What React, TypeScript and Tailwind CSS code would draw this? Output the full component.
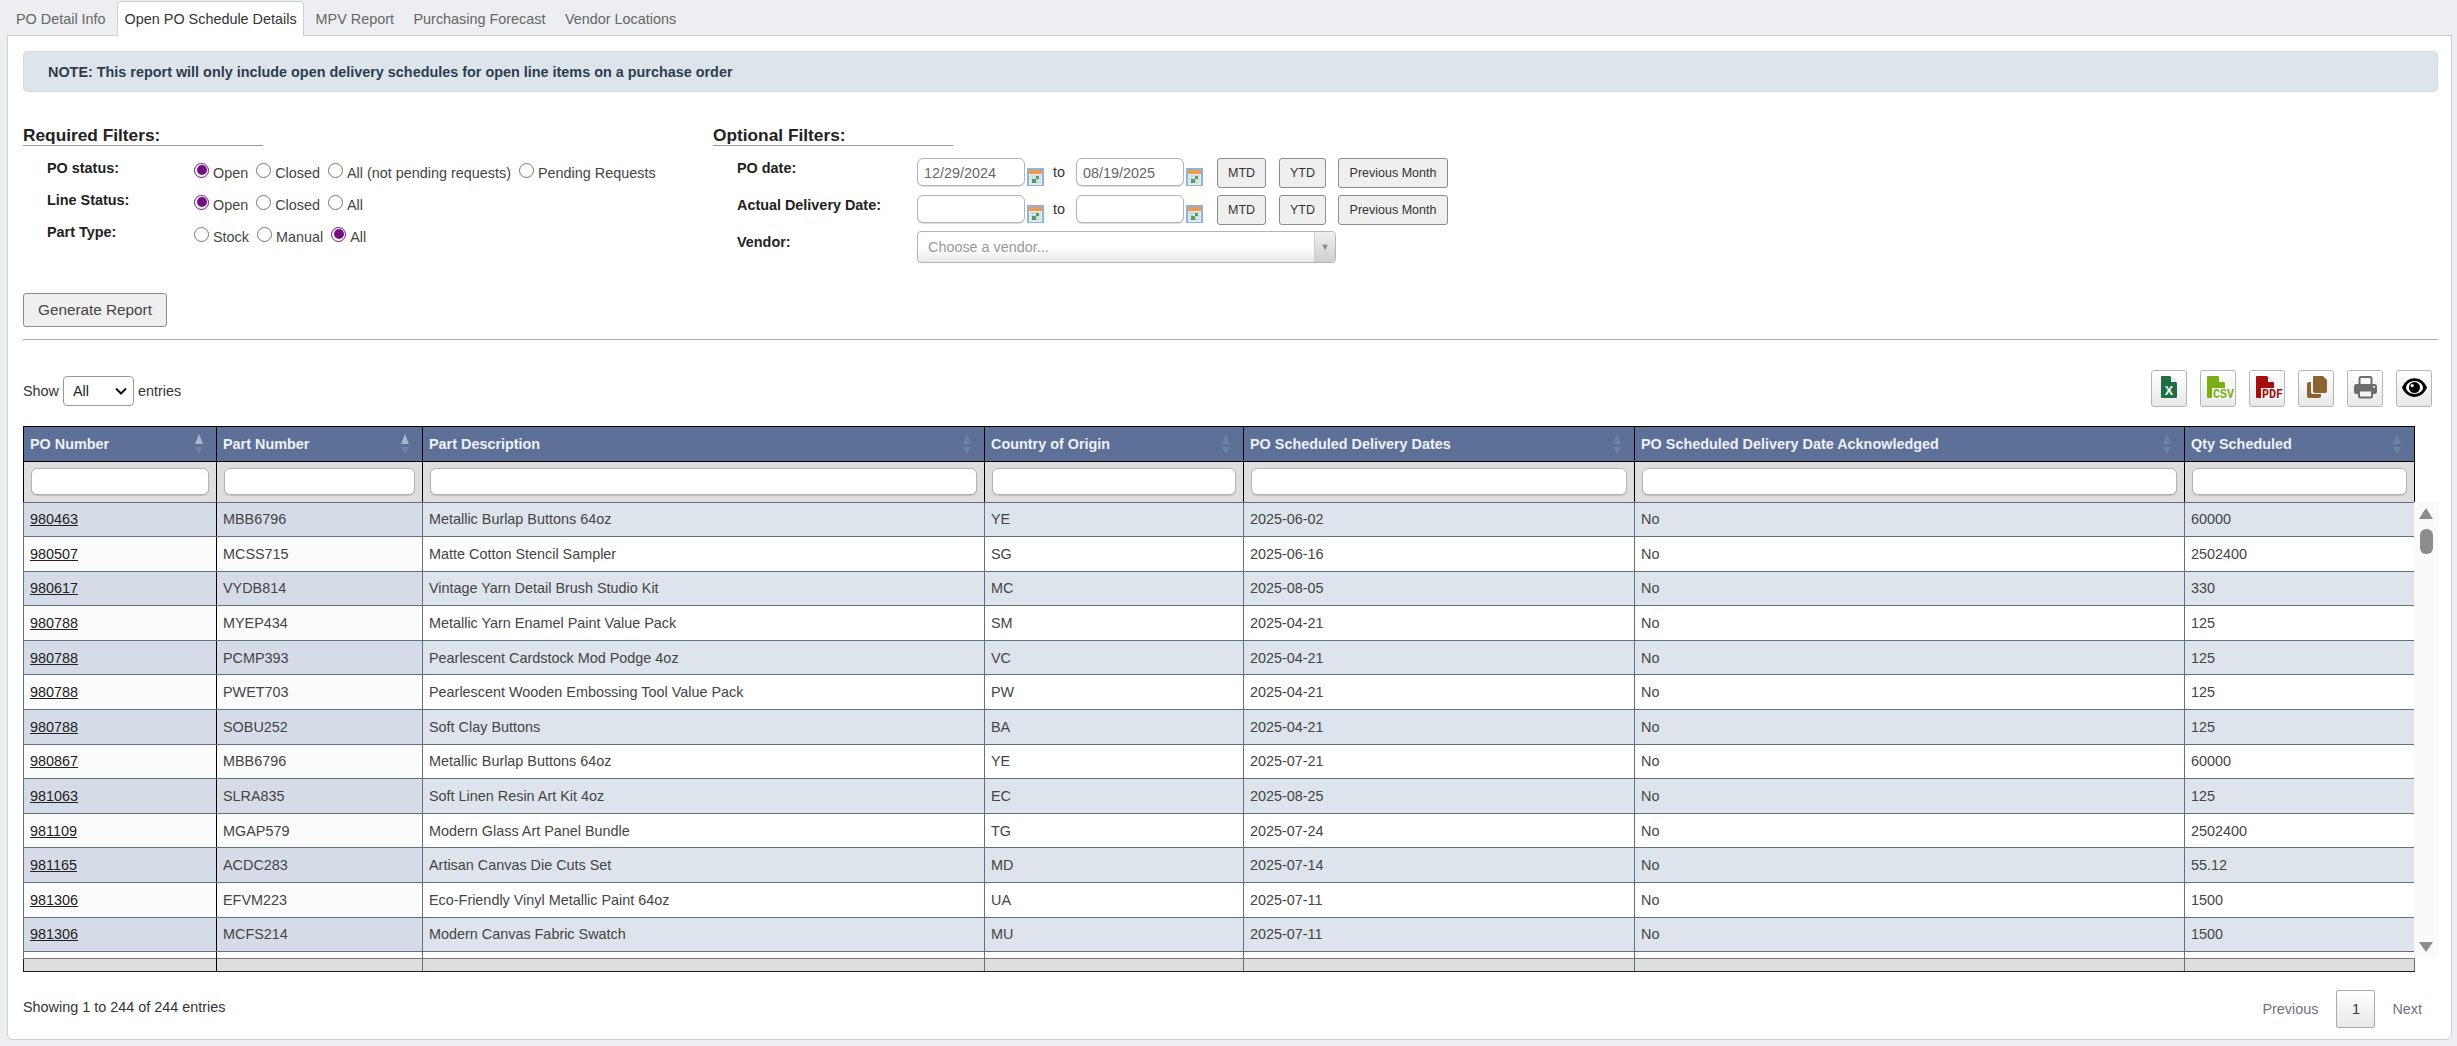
const rows = [
  ["980463", "MBB6796", "Metallic Burlap Buttons 64oz", "YE", "2025-06-02", "No", "60000"],
  ["980507", "MCSS715", "Matte Cotton Stencil Sampler", "SG", "2025-06-16", "No", "2502400"],
  ["980617", "VYDB814", "Vintage Yarn Detail Brush Studio Kit", "MC", "2025-08-05", "No", "330"],
  ["980788", "MYEP434", "Metallic Yarn Enamel Paint Value Pack", "SM", "2025-04-21", "No", "125"],
  ["980788", "PCMP393", "Pearlescent Cardstock Mod Podge 4oz", "VC", "2025-04-21", "No", "125"],
  ["980788", "PWET703", "Pearlescent Wooden Embossing Tool Value Pack", "PW", "2025-04-21", "No", "125"],
  ["980788", "SOBU252", "Soft Clay Buttons", "BA", "2025-04-21", "No", "125"],
  ["980867", "MBB6796", "Metallic Burlap Buttons 64oz", "YE", "2025-07-21", "No", "60000"],
  ["981063", "SLRA835", "Soft Linen Resin Art Kit 4oz", "EC", "2025-08-25", "No", "125"],
  ["981109", "MGAP579", "Modern Glass Art Panel Bundle", "TG", "2025-07-24", "No", "2502400"],
  ["981165", "ACDC283", "Artisan Canvas Die Cuts Set", "MD", "2025-07-14", "No", "55.12"],
  ["981306", "EFVM223", "Eco-Friendly Vinyl Metallic Paint 64oz", "UA", "2025-07-11", "No", "1500"],
  ["981306", "MCFS214", "Modern Canvas Fabric Swatch", "MU", "2025-07-11", "No", "1500"],
];

const columns = [
  { title: "PO Number", width: 193 },
  { title: "Part Number", width: 206 },
  { title: "Part Description", width: 562 },
  { title: "Country of Origin", width: 259 },
  { title: "PO Scheduled Delivery Dates", width: 391 },
  { title: "PO Scheduled Delivery Date Acknowledged", width: 550 },
  { title: "Qty Scheduled", width: 230 },
];

function Cols() {
  return (
    <colgroup>
      {columns.map((c) => (
        <col key={c.title} style={{ width: c.width }} />
      ))}
    </colgroup>
  );
}

function Radio({ label, checked }: { label: string; checked?: boolean }) {
  return (
    <span className="mr-[8px] inline-flex items-center whitespace-nowrap">
      <span
        className={`mr-[4px] flex h-[15px] w-[15px] shrink-0 items-center justify-center rounded-full border bg-white ${
          checked ? "border-[#70117f]" : "border-[#767676]"
        }`}
      >
        {checked && <span className="h-[10px] w-[10px] rounded-full bg-[#70117f]" />}
      </span>
      <span className="mt-[5px]">{label}</span>
    </span>
  );
}

function CalendarIcon() {
  return (
    <svg width="17" height="18" viewBox="0 0 17 18" className="ml-[2px] mt-[10px] shrink-0">
      <rect width="17" height="18" fill="#8db2dc" />
      <rect x="2" y="2" width="13" height="15" fill="#e6edf3" />
      <rect x="2" y="2" width="13" height="4" fill="#f09a4e" />
      <path d="M3 8h11M3 11h11M3 14h11M6 7v9M10 7v9" stroke="#bfcbd6" strokeWidth="1" />
      <rect x="9" y="8" width="3" height="3" fill="#4ea15c" />
      <rect x="5" y="11" width="4" height="4" fill="#4ea15c" />
    </svg>
  );
}

function DateInput({ value }: { value?: string }) {
  return (
    <span className="flex h-[28px] w-[108px] shrink-0 items-center rounded-[6px] border border-[#b4b4b4] bg-white pl-[6px] pt-[1px] text-[#666] shadow-[0_1px_1px_rgba(0,0,0,0.15)]">
      {value}
    </span>
  );
}

function SmallButton({ children, w, ml }: { children: string; w: string; ml: string }) {
  return (
    <button className={`${ml} h-[30px] shrink-0 ${w} whitespace-nowrap rounded-[3px] border border-[#8c8c8c] bg-[#efefef] text-center text-[12.5px] text-[#333]`}>
      {children}
    </button>
  );
}

function DateRow({ label, from, to }: { label: string; from?: string; to?: string }) {
  return (
    <div className="flex h-[37px]">
      <div className="w-[204px] whitespace-nowrap pl-[24px] pt-[2px] font-bold text-[#222]">{label}</div>
      <DateInput value={from} />
      <CalendarIcon />
      <span className="ml-[9px] mr-[11px] pt-[6px] text-[#333]">to</span>
      <DateInput value={to} />
      <CalendarIcon />
      <SmallButton ml="ml-[14px]" w="w-[49px]">MTD</SmallButton>
      <SmallButton ml="ml-[13px]" w="w-[47px]">YTD</SmallButton>
      <SmallButton ml="ml-[12px]" w="w-[110px]">Previous Month</SmallButton>
    </div>
  );
}

function ToolButton({ children }: { children: React.ReactNode }) {
  return (
    <div className="h-[37px] w-[36px] rounded-[3px] border border-[#b5b5b5] bg-gradient-to-b from-white to-[#e8e8e8]">
      <svg width="34" height="35" viewBox="0 0 34 35" className="block">
        {children}
      </svg>
    </div>
  );
}

function FileDoc({ x, w, fill }: { x: number; w: number; fill: string }) {
  const r = x + w;
  return (
    <>
      <path d={`M${x + 1} 5H${r - 7}L${r} 12V26a1 1 0 0 1-1 1H${x + 1}a1 1 0 0 1-1-1V6a1 1 0 0 1 1-1z`} fill={fill} />
      <path d={`M${r - 6} 6L${r - 1} 11H${r - 6}z`} fill="#fff" />
    </>
  );
}

function LabelledDoc({ fill, label }: { fill: string; label: string }) {
  return (
    <>
      <FileDoc x={6} w={18} fill={fill} />
      <rect x="11" y="17" width="23" height="11" fill="#f6f6f6" />
      <text
        x="12"
        y="27"
        fontSize="12"
        fontWeight="700"
        fontFamily="'Liberation Mono', monospace"
        fill={fill}
        textLength="21"
        lengthAdjust="spacingAndGlyphs"
      >
        {label}
      </text>
    </>
  );
}

function SortArrows({ active }: { active?: boolean }) {
  return (
    <span className="flex flex-col gap-[3px]">
      <span
        className={`h-0 w-0 border-x-[4.5px] border-b-[10px] border-x-transparent ${
          active ? "border-b-[#a9b6cb]" : "border-b-[#71829f]"
        }`}
      />
      <span className="h-0 w-0 border-x-[4.5px] border-t-[7px] border-x-transparent border-t-[#71829f]" />
    </span>
  );
}

export default function App() {
  return (
    <div className="h-[1046px] w-[2457px] overflow-hidden bg-[#eceef1] font-['Liberation_Sans',Arial,sans-serif] text-[14.4px] leading-[16px] text-[#333]">
      {/* tabs */}
      <div className="flex h-[35px] items-end gap-[3.5px] whitespace-nowrap pl-[8px]">
        <div className="flex h-[30px] items-center px-[8px] pb-[2px] text-[#666]">PO Detail Info</div>
        <div className="relative z-10 mb-[-1px] flex h-[35px] items-center rounded-t-[4px] border border-b-0 border-[#c9cfd8] bg-white px-[6.5px] pb-[1px] text-[#333]">
          Open PO Schedule Details
        </div>
        <div className="flex h-[30px] items-center px-[8px] pb-[2px] text-[#666]">MPV Report</div>
        <div className="flex h-[30px] items-center px-[8px] pb-[2px] text-[#666]">Purchasing Forecast</div>
        <div className="flex h-[30px] items-center px-[8px] pb-[2px] text-[#666]">Vendor Locations</div>
      </div>

      {/* panel */}
      <div className="ml-[7px] mr-[5px] h-[1005px] rounded-b-[6px] border border-[#c9cfd8] bg-white pl-[15px] pr-[13px] pt-[15px]">
        <div className="flex h-[41px] items-center rounded-[4px] border border-[#d3dde5] bg-[#dde5eb] pl-[24px] font-bold text-[#2b3e50]">
          NOTE: This report will only include open delivery schedules for open line items on a purchase order
        </div>

        {/* filters */}
        <div className="mt-[34px] flex h-[167px]">
          <div className="w-[690px]">
            <div className="h-[20px] w-[240px] border-b border-[#999] text-[17.3px] font-bold leading-[18px] text-[#222]">
              Required Filters:
            </div>
            <div className="mt-[8px] grid grid-cols-[171px_1fr] auto-rows-[32px]">
              <div className="pl-[24px] pt-[6px] font-bold text-[#222]">PO status:</div>
              <div className="flex items-center text-[#444]">
                <Radio label="Open" checked />
                <Radio label="Closed" />
                <Radio label="All (not pending requests)" />
                <Radio label="Pending Requests" />
              </div>
              <div className="pl-[24px] pt-[6px] font-bold text-[#222]">Line Status:</div>
              <div className="flex items-center text-[#444]">
                <Radio label="Open" checked />
                <Radio label="Closed" />
                <Radio label="All" />
              </div>
              <div className="pl-[24px] pt-[6px] font-bold text-[#222]">Part Type:</div>
              <div className="flex items-center text-[#444]">
                <Radio label="Stock" />
                <Radio label="Manual" />
                <Radio label="All" checked />
              </div>
            </div>
          </div>
          <div>
            <div className="h-[20px] w-[240px] border-b border-[#999] text-[17.3px] font-bold leading-[18px] text-[#222]">
              Optional Filters:
            </div>
            <div className="mt-[12px]">
              <DateRow label="PO date:" from="12/29/2024" to="08/19/2025" />
              <DateRow label="Actual Delivery Date:" />
              <div className="mt-[-1px] flex">
                <div className="w-[204px] pl-[24px] pt-[3px] font-bold text-[#222]">Vendor:</div>
                <div className="relative flex h-[32px] w-[419px] items-center rounded-[4px] border border-[#b4b4b4] bg-gradient-to-b from-white via-white to-[#eaeaea] pl-[10px] text-[#999]">
                  Choose a vendor...
                  <span className="absolute right-0 top-0 flex h-full w-[21px] items-center justify-center rounded-r-[4px] border-l border-[#ccc] bg-gradient-to-b from-[#f0f0f0] to-[#cfcfcf] text-[9px] text-[#888]">
                    ▼
                  </span>
                </div>
              </div>
            </div>
          </div>
        </div>

        <button className="block h-[34px] w-[144px] rounded-[3px] border border-[#8c8c8c] bg-[#efefef] text-[15.3px] text-[#444]">
          Generate Report
        </button>
        <div className="mt-[12px] h-px bg-[#aaa]" />

        {/* length + export */}
        <div className="flex h-[86px] items-start justify-between pr-[6px] pt-[30px]">
          <div className="mt-[6px] flex items-center text-[#333]">
            Show
            <span className="mx-[4px] flex h-[30px] w-[71px] items-center justify-between rounded-[4px] border border-[#999] bg-white pl-[9px] pr-[6px] text-[#222]">
              All
              <svg width="12" height="12" viewBox="0 0 12 12">
                <path d="M1 3.5l5 5 5-5" fill="none" stroke="#111" strokeWidth="2" />
              </svg>
            </span>
            entries
          </div>
          <div className="flex gap-[13px]">
            <ToolButton>
              <FileDoc x={9} w={16} fill="#1d6f42" />
              <text x="17" y="24" textAnchor="middle" fontSize="12.5" fontWeight="700" fontFamily="'Liberation Sans', sans-serif" fill="#fff">
                X
              </text>
            </ToolButton>
            <ToolButton>
              <LabelledDoc fill="#7aae14" label="CSV" />
            </ToolButton>
            <ToolButton>
              <LabelledDoc fill="#a30e0e" label="PDF" />
            </ToolButton>
            <ToolButton>
              <path d="M15 5h9l4 4v11a2 2 0 0 1-2 2H16a2 2 0 0 1-2-2V6a1 1 0 0 1 1-1z" fill="#8a6331" />
              <path d="M10 11h2v11a3 3 0 0 0 3 1h7v2a2 2 0 0 1-2 2H10a2 2 0 0 1-2-2V13a2 2 0 0 1 2-2z" fill="#8a6331" />
            </ToolButton>
            <ToolButton>
              <rect x="11.5" y="6" width="12" height="9" rx="1.5" fill="none" stroke="#6d6d6d" strokeWidth="2" />
              <rect x="6" y="13" width="23" height="10" rx="2.5" fill="#6d6d6d" />
              <rect x="11" y="19.5" width="13" height="7" rx="1" fill="#f4f4f4" stroke="#6d6d6d" strokeWidth="2" />
              <circle cx="26" cy="16" r="1" fill="#fff" />
            </ToolButton>
            <ToolButton>
              <path d="M5 16.5C10 4 25 4 30 16.5C25 29 10 29 5 16.5Z" fill="#000" />
              <ellipse cx="17.5" cy="16.5" rx="8.5" ry="6.5" fill="#fff" />
              <circle cx="17.5" cy="16.5" r="5.5" fill="#000" />
              <circle cx="15.2" cy="14.6" r="1.6" fill="#fff" />
            </ToolButton>
          </div>
        </div>

        {/* table */}
        <div className="w-[2415px]">
          <table className="w-[2391px] table-fixed border-collapse border-t border-black">
            <Cols />
            <thead>
              <tr className="h-[35px] bg-[#5d7097]">
                {columns.map((c, i) => (
                  <th
                    key={c.title}
                    className={`border-b border-r border-black pl-[6px] pr-[13px] text-left font-bold ${i === 0 ? "border-l" : ""}`}
                  >
                    <div className="flex items-center justify-between">
                      <span className="text-[#eef1f6]">{c.title}</span>
                      <SortArrows active={i < 2} />
                    </div>
                  </th>
                ))}
              </tr>
              <tr className="h-[40px] bg-[#dedede]">
                {columns.map((c, i) => (
                  <th key={c.title} className={`border-r border-black px-[7px] ${i === 0 ? "border-l" : ""}`}>
                    <div className="h-[27px] w-full rounded-[6px] border border-[#b4b4b4] bg-white shadow-[0_1px_1px_rgba(0,0,0,0.15)]" />
                  </th>
                ))}
              </tr>
            </thead>
          </table>
          <div className="flex h-[456px]">
            <div className="h-full w-[2391px] shrink-0 overflow-hidden">
              <table className="w-[2391px] table-fixed border-collapse text-[#444]">
                <Cols />
                <tbody>
                  {rows.map((row, r) => (
                    <tr key={r} className={`h-[34.6px] ${r % 2 === 0 ? "bg-[#dde4ec]" : "bg-white"}`}>
                      {row.map((cell, c) => (
                        <td
                          key={c}
                          className={`whitespace-nowrap border border-[#5f7280] px-[6px] ${c === 0 ? "border-r-black" : ""} ${
                            c < 2 ? (r % 2 === 0 ? "bg-[#d6dce7]" : "bg-[#fbfbfb]") : ""
                          } ${c === 1 ? "border-l-black" : ""}`}
                        >
                          {c === 0 ? <a className="text-[#222] underline">{cell}</a> : cell}
                        </td>
                      ))}
                    </tr>
                  ))}
                  <tr className="h-[34px] bg-white">
                    {columns.map((c, i) => (
                      <td key={c.title} className={`border border-[#5f7280] ${i === 0 ? "border-r-black" : ""}`} />
                    ))}
                  </tr>
                </tbody>
              </table>
            </div>
            {/* drawn scrollbar */}
            <div className="flex w-[24px] flex-col items-center bg-[#fafafa] pt-[6px]">
              <span className="h-0 w-0 border-x-[7.5px] border-b-[11px] border-x-transparent border-b-[#8c8c8c]" />
              <span className="mt-[10px] h-[25px] w-[13px] rounded-[6px] bg-[#8c8c8c]" />
              <span className="mb-[6px] mt-auto h-0 w-0 border-x-[7.5px] border-t-[10px] border-x-transparent border-t-[#8c8c8c]" />
            </div>
          </div>
          <table className="w-[2391px] table-fixed border-collapse">
            <Cols />
            <tfoot>
              <tr className="h-[13px] bg-[#dedede]">
                {columns.map((c, i) => (
                  <td
                    key={c.title}
                    className={`border-b border-r border-t border-b-[#222] border-t-[#777] border-r-[#5f7280] ${i === 0 ? "border-l border-l-[#222] border-r-black" : ""}`}
                  />
                ))}
              </tr>
            </tfoot>
          </table>
        </div>

        {/* footer */}
        <div className="mt-[18px] flex items-start justify-between pr-[16px]">
          <div className="pt-[9px] text-[#333]">Showing 1 to 244 of 244 entries</div>
          <div className="flex items-center text-[#6b7280]">
            <span>Previous</span>
            <span className="ml-[18px] mr-[17px] flex h-[38px] w-[39px] items-center justify-center rounded-[2px] border border-[#aaa] bg-gradient-to-b from-white to-[#e8e8e8] text-[#333]">
              1
            </span>
            <span>Next</span>
          </div>
        </div>
      </div>
    </div>
  );
}
